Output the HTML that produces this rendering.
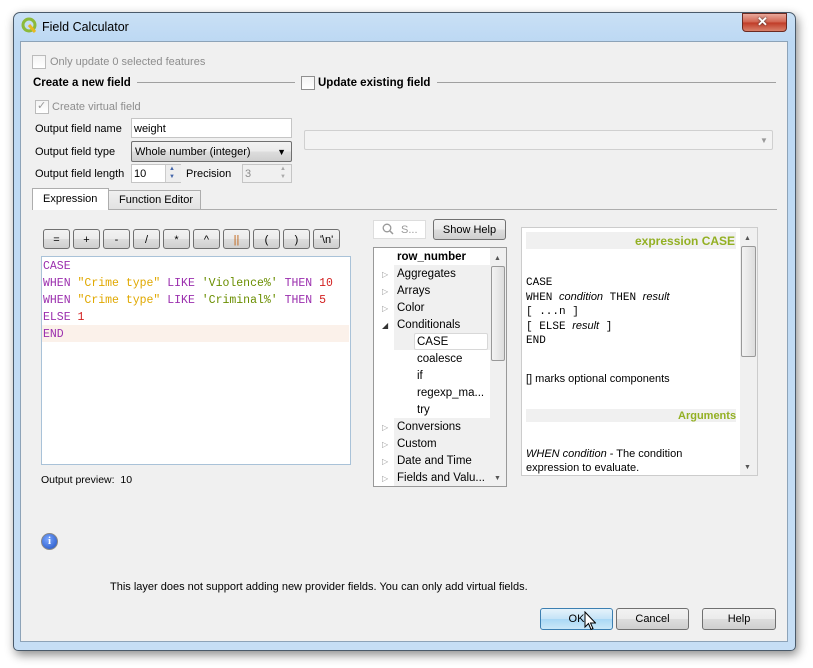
<!DOCTYPE html>
<html><head><style>
body{margin:0;width:813px;height:668px;background:#fff;position:relative;overflow:hidden;font-family:"Liberation Sans",sans-serif;font-size:11px;color:#000}
.a{position:absolute}
.frame{left:13px;top:12px;width:781px;height:637px;border:1px solid #4a5a6a;border-radius:7px 7px 5px 5px;background:linear-gradient(180deg,#c9e0f5 0,#bcd8f3 30px,#c6def5 100%);box-shadow:2px 4px 10px rgba(0,0,0,.45)}
.client{left:20px;top:41px;width:766px;height:599px;background:#f0f0f0;border:1px solid #8da3b8}
.t{position:absolute;white-space:nowrap;line-height:14px}
.cb{position:absolute;width:12px;height:12px;border:1px solid #8f8f8f;background:linear-gradient(#f4f4f4,#fff)}
.dis{color:#8d8d8d}
.inp{position:absolute;background:#fff;border:1px solid #c5c5c5;box-sizing:border-box}
.btn{position:absolute;box-sizing:border-box;border:1px solid #707070;border-radius:3px;background:linear-gradient(#f2f2f2 0,#ebebeb 50%,#dddddd 51%,#cfcfcf 100%);text-align:center;line-height:20px}
.mono{font-family:"Liberation Mono",monospace;font-size:11.5px}
.kw{color:#9b2fae}.st{color:#e0a800}.sq{color:#6a8e00}.nm{color:#d21f1f}
.tree div{position:absolute;white-space:nowrap;font-size:11.5px}
.tree .arr{color:#999;font-size:8px}
</style></head><body>
<div class="a frame"></div>
<svg class="a" style="left:21px;top:17px" width="16" height="16" viewBox="0 0 16 16"><circle cx="8" cy="8" r="6" fill="none" stroke="#8cba3a" stroke-width="3"/><path d="M8 8l6 7" stroke="#e8b820" stroke-width="3"/></svg>
<div class="t" style="left:42px;top:20px;font-size:12.5px">Field Calculator</div>
<div class="a" style="left:742px;top:13px;width:45px;height:19px;border:1px solid #6b2a22;border-radius:0 0 4px 4px;box-sizing:border-box;background:linear-gradient(#e9a99c,#d0604c 50%,#c03a26 51%,#d8806a)"></div>
<div class="t" style="left:757px;top:15px;color:#fff;font-weight:bold;font-size:13px;text-shadow:0 0 2px #333">✕</div>
<div class="a client"></div>

<div class="cb" style="left:32px;top:55px;border-color:#bbb"></div>
<div class="t dis" style="left:50px;top:55px">Only update 0 selected features</div>
<div class="t" style="left:33px;top:76px;font-weight:bold;font-size:11.5px">Create a new field</div>
<div class="a" style="left:137px;top:82px;width:158px;height:1px;background:#a0a0a0"></div>
<div class="cb" style="left:301px;top:76px"></div>
<div class="t" style="left:318px;top:76px;font-weight:bold;font-size:11.5px">Update existing field</div>
<div class="a" style="left:437px;top:82px;width:339px;height:1px;background:#a0a0a0"></div>
<div class="cb" style="left:35px;top:100px;border-color:#bbb"></div>
<div class="t" style="left:37px;top:99px;color:#999">✓</div>
<div class="t dis" style="left:52px;top:100px">Create virtual field</div>

<div class="t" style="left:35px;top:122px">Output field name</div>
<div class="inp" style="left:131px;top:118px;width:161px;height:20px"></div>
<div class="t" style="left:134px;top:122px">weight</div>
<div class="t" style="left:35px;top:145px">Output field type</div>
<div class="btn" style="left:131px;top:141px;width:161px;height:21px;border-radius:2px;text-align:left;padding-left:3px;line-height:20px">Whole number (integer)<span style="position:absolute;right:5px;top:0;font-size:9px">▼</span></div>
<div class="t" style="left:35px;top:167px">Output field length</div>
<div class="inp" style="left:131px;top:164px;width:50px;height:19px"></div>
<div class="t" style="left:134px;top:167px">10</div>
<div class="a" style="left:165px;top:165px;width:15px;height:17px;background:#eee;border-left:1px solid #ccc"></div>
<div class="t" style="left:169px;top:165px;font-size:6px;line-height:8px;color:#4466aa">▲<br>▼</div>
<div class="t" style="left:186px;top:167px">Precision</div>
<div class="inp" style="left:242px;top:164px;width:50px;height:19px;background:#f0f0f0"></div>
<div class="t dis" style="left:245px;top:167px">3</div>
<div class="t" style="left:280px;top:165px;font-size:6px;line-height:8px;color:#aaa">▲<br>▼</div>
<div class="inp" style="left:304px;top:130px;width:469px;height:20px;border-radius:2px;background:#f3f3f3;border-color:#d0d0d0"></div>
<div class="t" style="left:760px;top:134px;font-size:8px;color:#999">▼</div>

<div class="a" style="left:33px;top:209px;width:744px;height:1px;background:#adadad"></div>
<div class="a" style="left:108px;top:190px;width:93px;height:19px;border:1px solid #adadad;border-bottom:none;box-sizing:border-box;background:linear-gradient(#f0f0f0,#e2e2e2)"></div>
<div class="t" style="left:119px;top:193px">Function Editor</div>
<div class="a" style="left:32px;top:188px;width:77px;height:22px;border:1px solid #adadad;border-bottom:none;box-sizing:border-box;background:#fff"></div>
<div class="t" style="left:43px;top:192px">Expression</div>

<div class="btn" style="left:43px;top:229px;width:27px;height:20px">=</div>
<div class="btn" style="left:73px;top:229px;width:27px;height:20px">+</div>
<div class="btn" style="left:103px;top:229px;width:27px;height:20px">-</div>
<div class="btn" style="left:133px;top:229px;width:27px;height:20px">/</div>
<div class="btn" style="left:163px;top:229px;width:27px;height:20px">*</div>
<div class="btn" style="left:193px;top:229px;width:27px;height:20px">^</div>
<div class="btn" style="left:223px;top:229px;width:27px;height:20px;color:#c06010">||</div>
<div class="btn" style="left:253px;top:229px;width:27px;height:20px">(</div>
<div class="btn" style="left:283px;top:229px;width:27px;height:20px">)</div>
<div class="btn" style="left:313px;top:229px;width:27px;height:20px">'\n'</div>

<div class="a" style="left:41px;top:256px;width:310px;height:209px;background:#fff;border:1px solid #a9c2d8;box-sizing:border-box"></div>
<div class="a" style="left:42px;top:325px;width:307px;height:17px;background:#fbf1ea"></div>
<div class="t mono" style="left:43px;top:258px;line-height:17px"><span class="kw">CASE</span><br><span class="kw">WHEN</span> <span class="st">"Crime type"</span> <span class="kw">LIKE</span> <span class="sq">'Violence%'</span> <span class="kw">THEN</span> <span class="nm">10</span><br><span class="kw">WHEN</span> <span class="st">"Crime type"</span> <span class="kw">LIKE</span> <span class="sq">'Criminal%'</span> <span class="kw">THEN</span> <span class="nm">5</span><br><span class="kw">ELSE</span> <span class="nm">1</span><br><span class="kw">END</span></div>
<div class="t" style="left:41px;top:473px;font-size:10.5px">Output preview:&nbsp; 10</div>

<div class="inp" style="left:373px;top:220px;width:53px;height:19px;border-color:#ddd"></div>
<svg class="a" style="left:382px;top:223px" width="12" height="12"><circle cx="5" cy="5" r="3.8" fill="none" stroke="#999" stroke-width="1.3"/><path d="M8 8l3 3" stroke="#999" stroke-width="1.5"/></svg>
<div class="t" style="left:401px;top:223px;color:#999">S...</div>
<div class="btn" style="left:433px;top:219px;width:73px;height:21px">Show Help</div>

<div class="a" style="left:373px;top:247px;width:134px;height:240px;background:#fff;border:1px solid #999;box-sizing:border-box"></div>
<div class="a" style="left:394px;top:265px;width:96px;height:85px;background:#f0f0f0"></div>
<div class="a" style="left:394px;top:418px;width:96px;height:68px;background:#f0f0f0"></div>
<div class="a" style="left:414px;top:333px;width:74px;height:17px;background:#fff;border:1px solid #d8d8d8;border-radius:2px;box-sizing:border-box"></div>
<div class="tree">
<div style="left:397px;top:251px;font-weight:bold">row_number</div>
<div class="arr" style="left:382px;top:270px">▷</div><div style="left:397px;top:268px">Aggregates</div>
<div class="arr" style="left:382px;top:287px">▷</div><div style="left:397px;top:285px">Arrays</div>
<div class="arr" style="left:382px;top:304px">▷</div><div style="left:397px;top:302px">Color</div>
<div class="arr" style="left:382px;top:321px;color:#333">◢</div><div style="left:397px;top:319px">Conditionals</div>
<div style="left:417px;top:336px">CASE</div>
<div style="left:417px;top:353px">coalesce</div>
<div style="left:417px;top:370px">if</div>
<div style="left:417px;top:387px">regexp_ma...</div>
<div style="left:417px;top:404px">try</div>
<div class="arr" style="left:382px;top:423px">▷</div><div style="left:397px;top:421px">Conversions</div>
<div class="arr" style="left:382px;top:440px">▷</div><div style="left:397px;top:438px">Custom</div>
<div class="arr" style="left:382px;top:457px">▷</div><div style="left:397px;top:455px">Date and Time</div>
<div class="arr" style="left:382px;top:474px">▷</div><div style="left:397px;top:472px">Fields and Valu...</div>
</div>
<div class="a" style="left:490px;top:248px;width:16px;height:238px;background:#f0f0f0"></div>
<div class="a" style="left:491px;top:266px;width:14px;height:95px;border:1px solid #999;border-radius:2px;box-sizing:border-box;background:linear-gradient(90deg,#f3f3f3,#ddd)"></div>
<div class="t" style="left:494px;top:252px;font-size:7px;color:#555">▲</div>
<div class="t" style="left:494px;top:472px;font-size:7px;color:#555">▼</div>

<div class="a" style="left:521px;top:227px;width:237px;height:249px;background:#fff;border:1px solid #ccc;box-sizing:border-box"></div>
<div class="a" style="left:526px;top:232px;width:210px;height:17px;background:#f0f0f0"></div>
<div class="t" style="left:635px;top:234px;font-weight:bold;font-size:12px;color:#93b023">expression CASE</div>
<div class="t mono" style="left:526px;top:276px;font-size:11px;line-height:14px">CASE<br>WHEN <i style="font-family:'Liberation Sans'">condition</i> THEN <i style="font-family:'Liberation Sans'">result</i><br>[ ...n ]<br>[ ELSE <i style="font-family:'Liberation Sans'">result</i> ]<br>END</div>
<div class="t" style="left:526px;top:372px;font-size:11px">[] marks optional components</div>
<div class="a" style="left:526px;top:409px;width:210px;height:13px;background:#f0f0f0"></div>
<div class="t" style="left:678px;top:409px;font-weight:bold;color:#93b023">Arguments</div>
<div class="t" style="left:526px;top:447px;font-size:11px"><i>WHEN condition</i> - The condition<br>expression to evaluate.</div>
<div class="a" style="left:740px;top:228px;width:17px;height:247px;background:#f0f0f0"></div>
<div class="a" style="left:741px;top:246px;width:15px;height:111px;border:1px solid #999;border-radius:2px;box-sizing:border-box;background:linear-gradient(90deg,#f3f3f3,#ddd)"></div>
<div class="t" style="left:744px;top:232px;font-size:7px;color:#555">▲</div>
<div class="t" style="left:744px;top:461px;font-size:7px;color:#555">▼</div>

<div class="a" style="left:41px;top:533px;width:15px;height:15px;border-radius:50%;background:radial-gradient(circle at 40% 35%,#7aa6ff,#1d4fc0);border:1px solid #888;color:#fff;font-weight:bold;font-size:11px;text-align:center;line-height:15px;font-family:'Liberation Serif',serif">i</div>

<div class="t" style="left:110px;top:580px;font-size:11px">This layer does not support adding new provider fields. You can only add virtual fields.</div>

<div class="btn" style="left:540px;top:608px;width:73px;height:22px;line-height:21px;border-color:#3c7fb1;background:linear-gradient(#e5f3fb,#c4e3f7 50%,#a9d8f5 51%,#cbe8f8)">OK</div>
<svg class="a" style="left:584px;top:611px" width="12" height="20" viewBox="0 0 12 20"><path d="M1 1v15l3.5-3.5 2.5 6 2-1-2.5-5.5h5z" fill="#fff" stroke="#000"/></svg>
<div class="btn" style="left:616px;top:608px;width:73px;height:22px;line-height:21px">Cancel</div>
<div class="btn" style="left:702px;top:608px;width:74px;height:22px;line-height:21px">Help</div>
</body></html>
